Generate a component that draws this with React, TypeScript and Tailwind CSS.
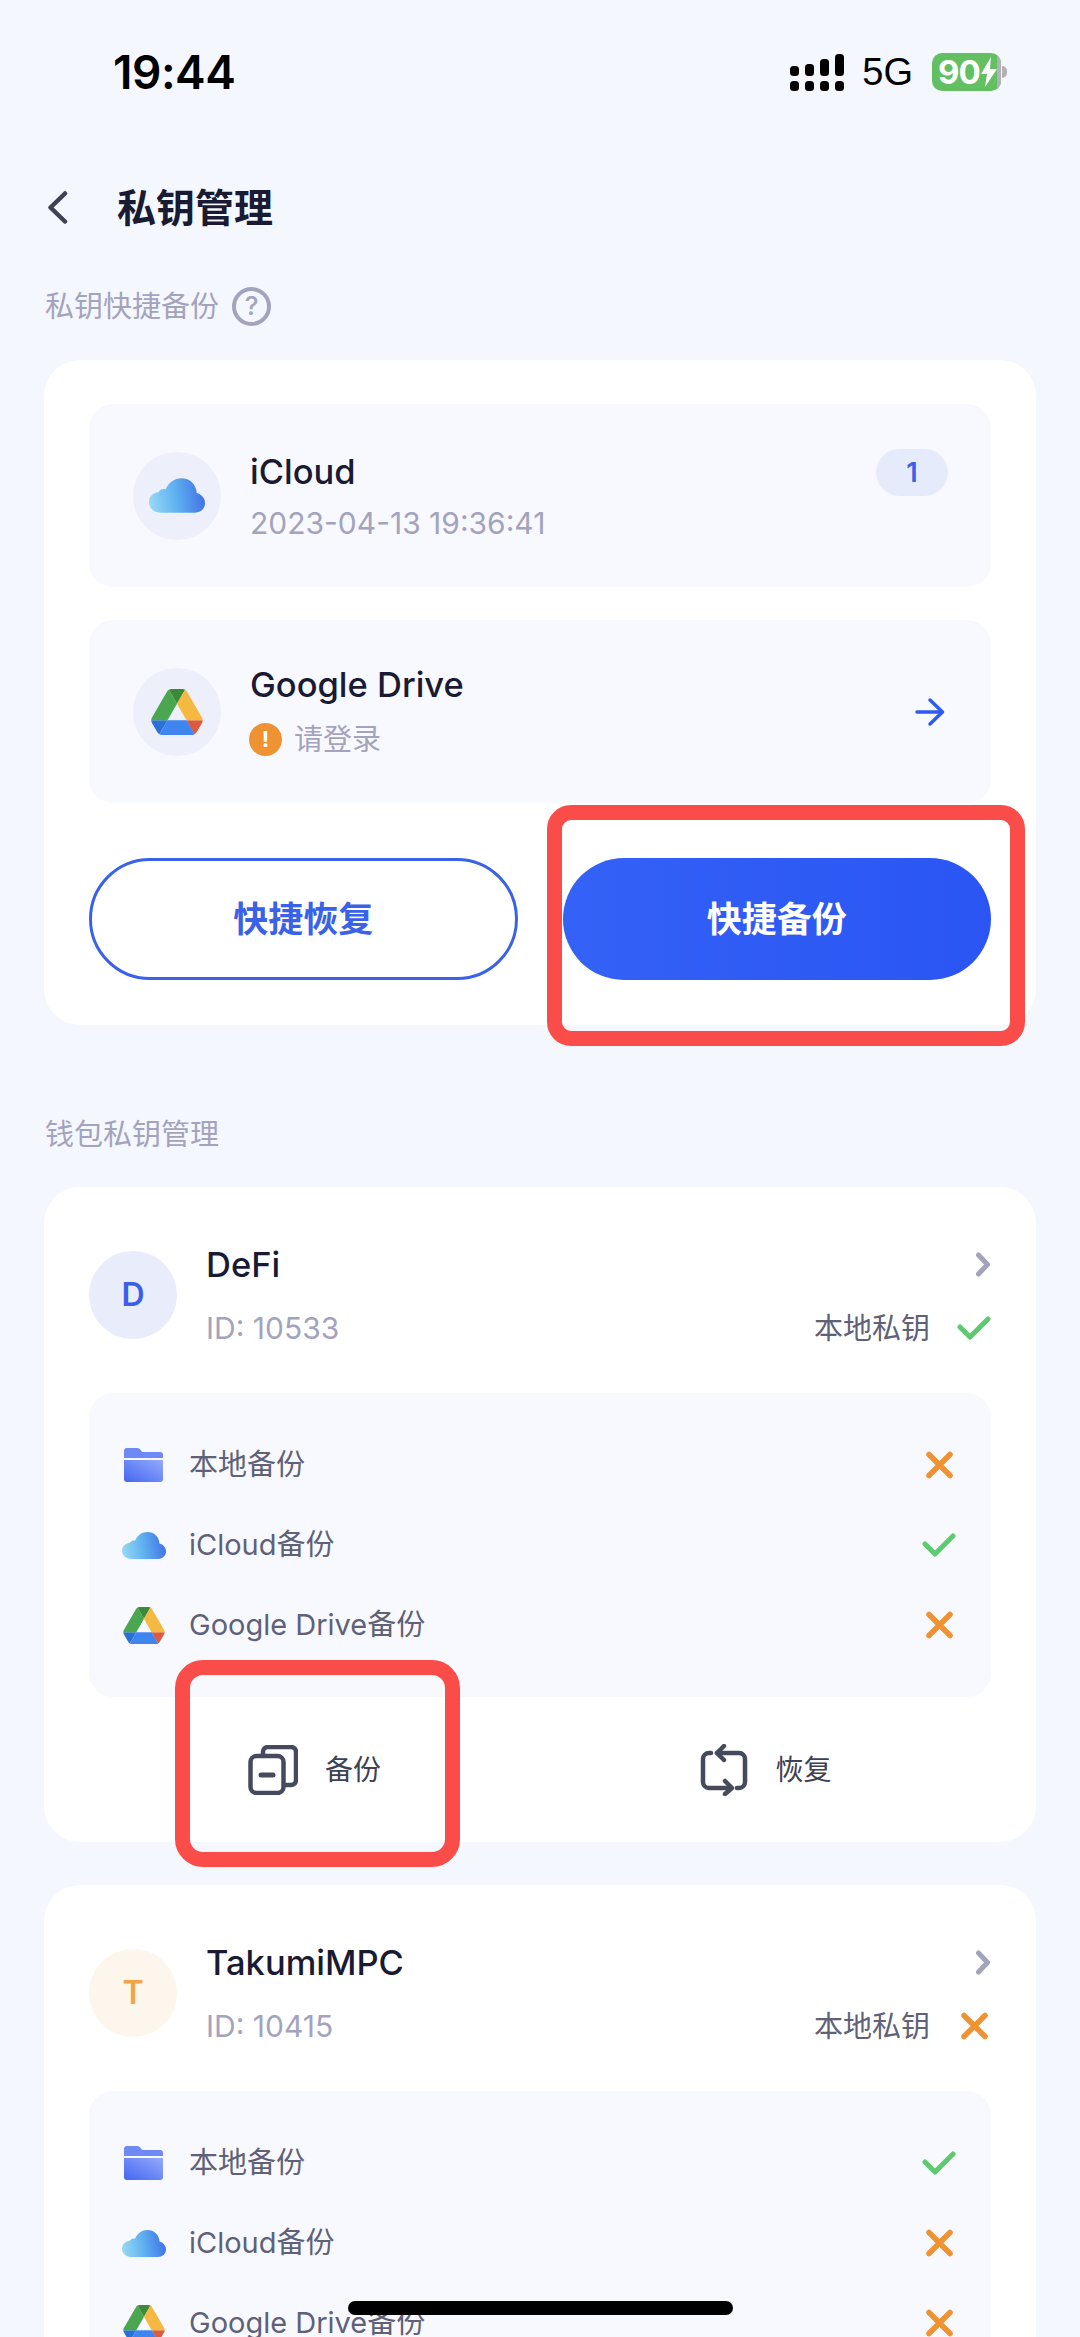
import React from 'react';

const CloudIcon = ({ className }: { className: string }) => (
  <svg viewBox="0 0 44 27" className={className}>
    <defs>
      <linearGradient id="cloudFill" x1="0" y1="0.6" x2="1" y2="0.5">
        <stop offset="0" stopColor="#97d8f5" />
        <stop offset="0.45" stopColor="#62b4f0" />
        <stop offset="1" stopColor="#3f72e6" />
      </linearGradient>
    </defs>
    <path
      d="M9 27C4 27 0 23.5 0 18.8C0 14.5 3.2 11.3 7.5 11C8.5 9 10.8 8 13 8.7C15.5 3.3 20 0 25.5 0C32 0 37 4.6 37.5 11.5C41.3 12.5 44 15.5 44 19.5C44 24 40.3 27 36 27Z"
      fill="url(#cloudFill)"
    />
  </svg>
);

const DriveIcon = ({ className }: { className: string }) => (
  <svg viewBox="0 0 87.3 78" className={className}>
    <path d="m6.6 66.85 3.85 6.65c.8 1.4 1.95 2.5 3.3 3.3l13.75-23.8h-27.5c0 1.55.4 3.1 1.2 4.5z" fill="#2b6fd8" />
    <path d="m43.65 25-13.75-23.8c-1.35.8-2.5 1.9-3.3 3.3l-25.4 44a9.06 9.06 0 0 0 -1.2 4.5h27.5z" fill="#4aa74f" />
    <path d="m73.55 76.8c1.35-.8 2.5-1.9 3.3-3.3l1.6-2.75 7.65-13.25c.8-1.4 1.2-2.95 1.2-4.5h-27.502l5.852 11.5z" fill="#dc5a3e" />
    <path d="m43.65 25 13.75-23.8c-1.35-.8-2.9-1.2-4.5-1.2h-18.5c-1.6 0-3.15.45-4.5 1.2z" fill="#3a8a3a" />
    <path d="m59.8 53h-32.3l-13.75 23.8c1.35.8 2.9 1.2 4.5 1.2h50.8c1.6 0 3.15-.45 4.5-1.2z" fill="#3f85f0" />
    <path d="m73.4 26.5-12.7-22c-.8-1.4-1.95-2.5-3.3-3.3l-13.75 23.8 16.15 28h27.45c0-1.55-.4-3.1-1.2-4.5z" fill="#f5b840" />
  </svg>
);

const FolderIcon = ({ className }: { className: string }) => (
  <svg viewBox="0 0 39 34" className={className}>
    <defs>
      <linearGradient id="folderFill" x1="0" y1="1" x2="1" y2="0">
        <stop offset="0" stopColor="#4566f2" />
        <stop offset="1" stopColor="#93aafb" />
      </linearGradient>
    </defs>
    <path d="M0 10V3a3 3 0 0 1 3-3h10c2 0 3 1 4 2.500c.7 1 1.500 1.500 3 1.500h16a3 3 0 0 1 3 3v3z" fill="#6f8af5" />
    <path d="M0 12h39v19a3 3 0 0 1-3 3H3a3 3 0 0 1-3-3z" fill="url(#folderFill)" />
  </svg>
);

const Check = ({ className }: { className: string }) => (
  <svg viewBox="0 0 34 24" className={className} fill="none">
    <path d="M3 11l10 10L31 3" stroke="#5ccb6e" strokeWidth="5" strokeLinecap="round" strokeLinejoin="round" />
  </svg>
);

const Cross = ({ className }: { className: string }) => (
  <svg viewBox="0 0 29 28" className={className} fill="none">
    <path d="M4 3.500l21 21M25 3.500l-21 21" stroke="#ee9232" strokeWidth="5.500" strokeLinecap="round" />
  </svg>
);

const Status = ({ ok }: { ok: boolean }) => (
  <div className="w-[34px] flex justify-center shrink-0">
    {ok ? <Check className="w-[34px] h-[24px]" /> : <Cross className="w-[29px] h-[28px]" />}
  </div>
);

const Chevron = ({ className }: { className: string }) => (
  <svg viewBox="0 0 16 25" className={className} fill="none">
    <path d="M3.500 3l9 9.500-9 9.500" stroke="#a3a3bd" strokeWidth="5" strokeLinecap="round" strokeLinejoin="round" />
  </svg>
);

const BackupIcon = () => (
  <svg viewBox="0 0 50 50" className="w-[50px] h-[50px]" fill="none" stroke="#454b5c" strokeWidth="4.500" strokeLinecap="round">
    <path d="M15 10V7a5 5 0 0 1 5-5h23a5 5 0 0 1 5 5v28a5 5 0 0 1-5 5h-5" />
    <rect x="2.500" y="11" width="33" height="37" rx="6" />
    <path d="M13 30h12" strokeWidth="5" />
  </svg>
);

const RestoreIcon = () => (
  <svg viewBox="0 0 50 52" className="w-[50px] h-[52px]" fill="none" stroke="#454b5c" strokeWidth="4.500" strokeLinecap="round" strokeLinejoin="round">
    <path d="M12 9h-2a6 6 0 0 0-6 6v23a6 6 0 0 0 6 6h22" />
    <path d="M26 37l7 7-7 6" />
    <path d="M38 44h2a6 6 0 0 0 6-6V15a6 6 0 0 0-6-6H18" />
    <path d="M25 2l-7 7 7 7" />
  </svg>
);

const BackupRow = ({ icon, label, ok }: { icon: React.ReactNode; label: string; ok: boolean }) => (
  <div className="h-[80px] flex items-center pr-[35px]">
    <div className="w-[100px] flex justify-center pl-[9px] shrink-0">{icon}</div>
    <span className="text-[29px] text-[#5f6178]">{label}</span>
    <div className="ml-auto">
      <Status ok={ok} />
    </div>
  </div>
);

const WalletCard = ({
  letter,
  name,
  id,
  avatarClass,
  letterClass,
  hasKey,
  local,
  icloud,
  drive,
}: {
  letter: string;
  name: string;
  id: string;
  avatarClass: string;
  letterClass: string;
  hasKey: boolean;
  local: boolean;
  icloud: boolean;
  drive: boolean;
}) => (
  <div className="mx-[44px] bg-white rounded-[36px] px-[45px] pt-[56px] shrink-0">
    <div className="flex items-center h-[107px]">
      <div className={`w-[88px] h-[88px] mb-[3px] rounded-full flex items-center justify-center shrink-0 ${avatarClass}`}>
        <span className={`text-[32px] font-semibold ${letterClass}`}>{letter}</span>
      </div>
      <div className="ml-[29px] flex-1 flex flex-col gap-[19px]">
        <div className="flex items-center justify-between h-[44px]">
          <span className="text-[34.5px] font-medium leading-none text-[#1a1b33]">{name}</span>
          <Chevron className="w-[16px] h-[25px] mb-[2px]" />
        </div>
        <div className="flex items-center justify-between h-[44px]">
          <span className="text-[30px] leading-none text-[#a3a3bd]">ID: {id}</span>
          <div className="flex items-center gap-[27px]">
            <span className="text-[29px] leading-none text-[#5f6178]">本地私钥</span>
            <Status ok={hasKey} />
          </div>
        </div>
      </div>
    </div>
    <div className="mt-[43px] bg-[#f8f9fe] rounded-[24px] pt-[32px] pb-[32px]">
      <BackupRow icon={<FolderIcon className="w-[39px] h-[34px]" />} label="本地备份" ok={local} />
      <BackupRow icon={<CloudIcon className="w-[44px] h-[27px]" />} label="iCloud备份" ok={icloud} />
      <BackupRow icon={<DriveIcon className="w-[42px] h-[37px]" />} label="Google Drive备份" ok={drive} />
    </div>
    <div className="grid grid-cols-2 h-[145px] items-center">
      <div className="flex items-center justify-center gap-[27px]">
        <BackupIcon />
        <span className="text-[28px] text-[#3d4152]">备份</span>
      </div>
      <div className="flex items-center justify-center gap-[26px]">
        <RestoreIcon />
        <span className="text-[28px] text-[#3d4152]">恢复</span>
      </div>
    </div>
  </div>
);

export default function App() {
  return (
    <div className="relative w-[1080px] h-[2337px] overflow-hidden bg-[#f4f7fe] flex flex-col font-['Inter','Noto_Sans_CJK_SC',sans-serif]">
      {/* status bar */}
      <div className="h-[144px] shrink-0 flex items-center pl-[113px] pr-[73px] text-black">
        <span className="text-[46px] font-semibold leading-none tracking-[-0.5px]">19:44</span>
        <div className="ml-auto flex items-center">
          <svg viewBox="0 0 54 37" className="w-[54px] h-[37px]" fill="#000">
            <rect x="0" y="12" width="9" height="10" rx="3.500" />
            <rect x="15" y="10" width="9" height="12" rx="3.500" />
            <rect x="30" y="5" width="9" height="17" rx="3.500" />
            <rect x="45" y="0" width="9" height="22" rx="3.500" />
            <rect x="0" y="27" width="9" height="10" rx="3.500" />
            <rect x="15" y="27" width="9" height="10" rx="3.500" />
            <rect x="30" y="27" width="9" height="10" rx="3.500" />
            <rect x="45" y="27" width="9" height="10" rx="3.500" />
          </svg>
          <span className="ml-[18px] text-[38px] leading-none font-['Liberation_Sans',sans-serif]">5G</span>
          <div className="ml-[19px] w-[69px] h-[38px] rounded-[10px] bg-[#62bf62] flex items-center pl-[6px] overflow-hidden relative">
            <span className="text-[33px] font-bold leading-none text-white tracking-[-1px]">90</span>
            <svg viewBox="0 0 16 30" className="w-[16px] h-[30px] ml-[1px]" fill="#fff">
              <path d="M10 0L0 17h6l-2 13L16 12H9z" />
            </svg>
            <div className="absolute right-0 top-0 bottom-0 w-[4px] bg-[#b3b0b8]" />
          </div>
          <div className="ml-[1px] w-[5px] h-[12px] rounded-r-full bg-[#b3b0b8]" />
        </div>
      </div>

      {/* header */}
      <div className="h-[126px] shrink-0 flex items-center pl-[47px]">
        <svg viewBox="0 0 21 33" className="w-[21px] h-[33px]" fill="none">
          <path d="M18 2.500L3.500 16.500 18 30.500" stroke="#3e4258" strokeWidth="4.500" strokeLinecap="round" strokeLinejoin="round" />
        </svg>
        <span className="ml-[49px] text-[39px] font-bold leading-none text-[#1a1b33]">私钥管理</span>
      </div>

      {/* quick backup */}
      <div className="h-[70px] pt-[2px] shrink-0 flex items-center pl-[45px]">
        <span className="text-[29px] leading-none text-[#a3a3bd]">私钥快捷备份</span>
        <div className="ml-[13px] w-[39px] h-[39px] rounded-full border-[4px] border-[#a3a3bd] flex items-center justify-center">
          <span className="text-[26px] font-medium leading-none text-[#a3a3bd]">?</span>
        </div>
      </div>

      <div className="mt-[20px] mx-[44px] bg-white rounded-[36px] px-[45px] pt-[44px] pb-[45px] shrink-0">
        <div className="relative h-[183px] rounded-[24px] bg-[#f8f9fe] flex items-center pl-[44px]">
          <div className="w-[88px] h-[88px] rounded-full bg-[#edf0fb] flex items-center justify-center shrink-0">
            <CloudIcon className="w-[56px] h-[35px]" />
          </div>
          <div className="ml-[29px] pt-[3px] flex flex-col gap-[16px]">
            <span className="text-[34.5px] font-medium leading-[36px] text-[#1a1b33]">iCloud</span>
            <span className="text-[30px] leading-[34px] text-[#a3a3bd]">2023-04-13 19:36:41</span>
          </div>
          <div className="absolute top-[45px] right-[43px] w-[72px] h-[47px] rounded-full bg-[#e6ebfb] flex items-center justify-center">
            <span className="text-[27px] font-semibold leading-none text-[#3b5fe8]">1</span>
          </div>
        </div>

        <div className="mt-[33px] h-[183px] rounded-[24px] bg-[#f8f9fe] flex items-center pl-[44px] pr-[46px]">
          <div className="w-[88px] h-[88px] rounded-full bg-[#edf0fb] flex items-center justify-center shrink-0">
            <DriveIcon className="w-[52px] h-[46px]" />
          </div>
          <div className="ml-[29px] flex flex-col gap-[19px]">
            <span className="text-[34.5px] font-medium leading-[36px] text-[#1a1b33]">Google Drive</span>
            <div className="flex items-center h-[34px] -ml-[1px]">
              <div className="w-[33px] h-[33px] rounded-full bg-[#ee9232] flex items-center justify-center">
                <span className="text-[22px] font-bold leading-none text-white">!</span>
              </div>
              <span className="ml-[12px] text-[29px] leading-none text-[#a3a3bd]">请登录</span>
            </div>
          </div>
          <svg viewBox="0 0 30 30" className="ml-auto w-[30px] h-[30px]" fill="none">
            <path d="M2 15h25M15 3l12.500 12L15 27" stroke="#2f5bf5" strokeWidth="3.500" strokeLinecap="round" strokeLinejoin="round" />
          </svg>
        </div>

        <div className="mt-[55px] grid grid-cols-2 gap-[45px]">
          <button className="h-[122px] rounded-full border-[3px] border-[#3a62e8] bg-white text-[35px] font-bold text-[#3a62e8]">
            快捷恢复
          </button>
          <button className="h-[122px] rounded-full bg-gradient-to-r from-[#3461f6] to-[#2a55f3] text-[35px] font-bold text-white">
            快捷备份
          </button>
        </div>
      </div>

      {/* wallets */}
      <div className="mt-[91px] mb-[35px] h-[36px] shrink-0 flex items-center pl-[45px]">
        <span className="text-[29px] leading-none text-[#a3a3bd]">钱包私钥管理</span>
      </div>

      <div className="flex flex-col gap-[43px]">
        <WalletCard
          letter="D"
          name="DeFi"
          id="10533"
          avatarClass="bg-[#e9edfb]"
          letterClass="text-[#3b5fe8]"
          hasKey
          local={false}
          icloud
          drive={false}
        />
        <WalletCard
          letter="T"
          name="TakumiMPC"
          id="10415"
          avatarClass="bg-[#fdf6ec]"
          letterClass="text-[#f0a54b]"
          hasKey={false}
          local
          icloud={false}
          drive={false}
        />
      </div>

      {/* red annotation boxes */}
      <div className="absolute left-[547px] top-[805px] w-[478px] h-[241px] border-[15px] border-[#fa4d4a] rounded-[24px]" />
      <div className="absolute left-[175px] top-[1660px] w-[285px] h-[207px] border-[15px] border-[#fa4d4a] rounded-[28px]" />

      {/* home indicator */}
      <div className="absolute left-[348px] top-[2301px] w-[385px] h-[14px] rounded-full bg-black" />
    </div>
  );
}
